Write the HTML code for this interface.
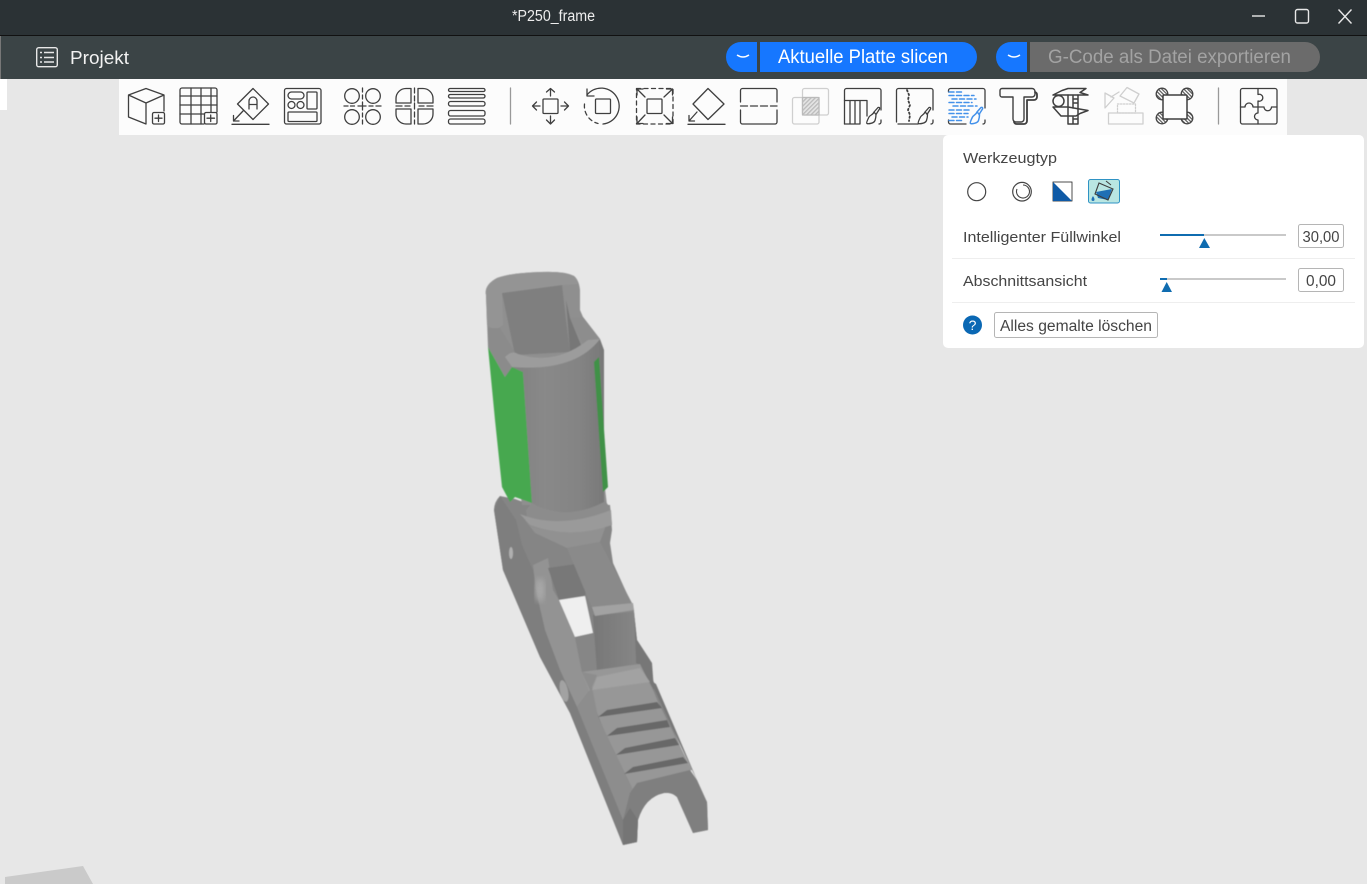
<!DOCTYPE html>
<html lang="de"><head><meta charset="utf-8"><title>P250_frame</title>
<style>html,body{margin:0;padding:0;background:#e7e7e7;overflow:hidden}svg{display:block}text{font-family:"Liberation Sans",sans-serif}</style></head>
<body>
<svg width="1367" height="884" viewBox="0 0 1367 884" xmlns="http://www.w3.org/2000/svg">
<defs>
<linearGradient id="cyl" x1="0" x2="1" y1="0" y2="0"><stop offset="0" stop-color="#7f7f7f"/><stop offset=".4" stop-color="#898989"/><stop offset=".75" stop-color="#848484"/><stop offset="1" stop-color="#787878"/></linearGradient>
<linearGradient id="post" x1="0" x2="1" y1="0" y2="0"><stop offset="0" stop-color="#777"/><stop offset="1" stop-color="#868686"/></linearGradient>
<filter id="soft"><feGaussianBlur stdDeviation=".6"/></filter>
<filter id="blur3"><feGaussianBlur stdDeviation="3"/></filter>
<pattern id="hatch" width="3" height="3" patternUnits="userSpaceOnUse" patternTransform="rotate(-45)"><rect width="3" height="3" fill="#e4e4e4"/><rect width="3" height="1.3" fill="#bbb"/></pattern>
<pattern id="hatch2" width="2.6" height="2.6" patternUnits="userSpaceOnUse" patternTransform="rotate(45)"><rect width="2.6" height="2.6" fill="#fff"/><rect width="2.6" height="1.3" fill="#666"/></pattern>
</defs>
<rect width="1367" height="884" fill="#e7e7e7"/>
<polygon points="5,884 5,877 83,866 93,884" fill="#cacaca"/>

<!-- top bars -->
<rect width="1367" height="35" fill="#2b3235"/>
<rect y="35" width="1367" height="1" fill="#111"/>
<rect y="36" width="1367" height="43" fill="#3b4446"/>
<rect y="36" width="1" height="43" fill="#777"/>
<rect y="79" width="7" height="31" fill="#fff"/>
<text x="512" y="21" font-size="15.500" fill="#eee" textLength="83" lengthAdjust="spacingAndGlyphs">*P250_frame</text>
<g fill="none" stroke="#e8e8e8" stroke-width="1.400">
<path d="M1252 16h13"/><rect x="1295.500" y="9.500" width="13" height="13.500" rx="2"/><path d="M1338.500 9.500l13 14M1351.500 9.500l-13 14"/>
<rect x="36.700" y="47.700" width="20.600" height="19" rx="2"/><path d="M44 52.500h10M44 57.500h10M44 62h10"/><path d="M40 52.500h2M40 57.500h2M40 62h2"/>
</g>
<text x="70" y="64" font-size="18.500" fill="#f2f2f2" textLength="59" lengthAdjust="spacingAndGlyphs">Projekt</text>
<path d="M757 42H741a15 15 0 0 0 0 30h16z" fill="#1677ff"/>
<path d="M760 42H962a15 15 0 0 1 0 30H760z" fill="#1677ff"/>
<path d="M737 55q6 4 12 0" fill="none" stroke="#fff" stroke-width="1.500"/>
<text x="778" y="63" font-size="19" fill="#fff" textLength="170" lengthAdjust="spacingAndGlyphs">Aktuelle Platte slicen</text>
<path d="M1027 42H1011a15 15 0 0 0 0 30h16z" fill="#1677ff"/>
<path d="M1030 42H1305a15 15 0 0 1 0 30H1030z" fill="#6b6b6b"/>
<path d="M1008 55q6 4 12 0" fill="none" stroke="#fff" stroke-width="1.500"/>
<text x="1048" y="63" font-size="19" fill="#a3a3a3" textLength="243" lengthAdjust="spacingAndGlyphs">G-Code als Datei exportieren</text>

<!-- toolbar -->
<rect x="119" y="79" width="1168" height="56" fill="#fcfcfc"/>
<g fill="none" stroke="#3f3f3f" stroke-width="1.300" stroke-linejoin="round" stroke-linecap="round">
<!-- cube -->
<path d="M128.500 95L146 88.500L164 95V111M128.500 95L146 103L164 95M146 103V124M128.500 95V117L146 124"/>
<rect x="152.500" y="112.500" width="12" height="11.500" rx="1.500"/><path d="M155 118.200h7M158.500 115v6.500"/>
<!-- grid -->
<path d="M204 124H182a2 2 0 0 1-2-2V90a2 2 0 0 1 2-2h33a2 2 0 0 1 2 2V112"/>
<path d="M191 88v36M201 88v36M211 88v24M180 96h37M180 105h37M180 114h24"/>
<rect x="204.500" y="112.500" width="12.500" height="11.500" rx="1.500"/><path d="M207 118.200h7.500M210.700 115v6.500"/>
<!-- diamond A -->
<path d="M253 88.500L268.500 104L253 119.500L237.500 104Z"/>
<path d="M249 109V101a4 4 0 0 1 8 0V109M249 104.500h8"/>
<path d="M243 111L233.500 121M233.500 115.500V121H239"/><path d="M232 124.300H269"/>
<!-- arrange -->
<rect x="284.500" y="88.500" width="36.500" height="35.500" rx="2"/>
<rect x="288" y="92" width="16" height="7" rx="3.500"/><circle cx="291.500" cy="105" r="3.500"/><circle cx="300.500" cy="105" r="3.500"/>
<rect x="307" y="92" width="10" height="17" rx="1"/><rect x="288" y="112" width="29" height="9.500" rx="1"/>
<!-- circles -->
<circle cx="352" cy="96" r="7.300"/><circle cx="373" cy="96" r="7.300"/><circle cx="352" cy="117" r="7.300"/><circle cx="373" cy="117" r="7.300"/>
<path d="M344 106h4M350.500 106h4M358 106h8M369 106h4M376 106h5M362.500 88v4M362.500 95v4M362.500 102v8M362.500 113v4M362.500 120v4"/>
<!-- quadrants -->
<path d="M411 88.500H406a10 10 0 0 0-10 10V103H411ZM418 88.500H423a10 10 0 0 1 10 10V103H418ZM411 124H406a10 10 0 0 1-10-10V109H411ZM418 124H423a10 10 0 0 0 10-10V109H418Z"/>
<path d="M396 106h6M405 106h5M419 106h5M427 106h6M414.500 88v5M414.500 96v5M414.500 103v6M414.500 112v5M414.500 120v4"/>
<!-- stripes -->
<rect x="448.500" y="88.500" width="36.500" height="3" rx="1.500"/><rect x="448.500" y="94.500" width="36.500" height="3.500" rx="1.700"/><rect x="448.500" y="101.500" width="36.500" height="4.500" rx="2"/><rect x="448.500" y="110.500" width="36.500" height="5.500" rx="2"/><rect x="448.500" y="119" width="36.500" height="5" rx="2"/>
<path d="M510.500 88V124" stroke="#999"/>
<!-- move -->
<rect x="543" y="99" width="15" height="14.500" rx="1"/>
<path d="M550.500 88.500V96M546.500 92L550.500 88.500L554.500 92M550.500 116V124M546.500 120L550.500 124L554.500 120M532.500 106H540M536.500 102L532.500 106L536.500 110M561 106H568.500M564.500 102L568.500 106L564.500 110"/>
<!-- rotate -->
<rect x="595.500" y="99" width="15" height="14.500" rx="1"/>
<path d="M587 95A18 18 0 1 1 603 124"/><path d="M587 89V96H594"/>
<path d="M584.500 104a18 18 0 0 0 13.500 19.500" stroke-dasharray="4 3.500"/>
<!-- scale -->
<rect x="647" y="99" width="15" height="14.500" rx="1"/>
<rect x="636.500" y="88.500" width="36.500" height="35.500" stroke-dasharray="4 3.500"/>
<path d="M637 89L645 97M637 95V89H643M672.500 89L664 97M672.500 95V89H666.500M637 123.500L645 115M637 117V123.500H643M672.500 123.500L664 115M672.500 117V123.500H666.500"/>
<!-- lay flat -->
<path d="M708 88.500L724 104L708 119.500L693 104Z"/><path d="M697 112L689 121M689 115.500V121H694.500"/><path d="M688 124.300H725"/>
<!-- cut -->
<path d="M740.500 102V90.500a2 2 0 0 1 2-2H775a2 2 0 0 1 2 2V102M740.500 110V122a2 2 0 0 0 2 2H775a2 2 0 0 0 2-2V110"/>
<path d="M740.500 106H777" stroke-dasharray="7 3"/>
<!-- boolean -->
<g stroke="#cfcfcf"><rect x="802.500" y="88.500" width="26" height="26.500" rx="2" fill="none"/><rect x="792.500" y="97.500" width="26.500" height="26.500" rx="2" fill="none"/><rect x="802.500" y="97.500" width="16.500" height="17.500" fill="url(#hatch)" stroke="#bbb"/></g>
<!-- supports -->
<path d="M844.500 124V90.500a2 2 0 0 1 2-2H879a2 2 0 0 1 2 2V110M881 120V122a2 2 0 0 1-2 2"/>
<path d="M844.500 100.500H867V116M850 100.500V124M855 100.500V124M860 100.500V124M844.500 124H860"/>
<path d="M874 112l4-4.500c1.500-.5 2 .5 1.500 1.500l-3.500 5.500M874 112c-1 3-4 3-5 5s-3 6-2 6.500 7 0 8-3 1-5 1-6z"/>
<!-- seam -->
<path d="M896.500 122V90.500a2 2 0 0 1 2-2H931a2 2 0 0 1 2 2V110M933 120V122a2 2 0 0 1-2 2M898 124H918"/>
<path d="M907 90l2 5-1 5 2 5-2 5 2 5-1 6" stroke-dasharray="1.500 2.500" stroke-width="1.800"/>
<path d="M925 112l4-4.500c1.500-.5 2 .5 1.500 1.500l-3.500 5.500M925 112c-1 3-3.500 3-4.500 5s-3 6-2 6.500 7 0 8-3 1-5 1-6z"/>
<!-- fuzzy paint -->
<path d="M948.500 92V90.500a2 2 0 0 1 2-2H983a2 2 0 0 1 2 2V108M985 120V122a2 2 0 0 1-2 2M948.500 120V122a2 2 0 0 0 2 2H966"/>
<g stroke="#4391ea" stroke-width="1.500" stroke-dasharray="5 2.500">
<path d="M949 92H964M949 95.500H974M952 99H976M949 102.500H972M953 106H977M949 110H970M949 113.500H968M952 117H968M949 120.500H962"/>
<path d="M977 112l4-4.500c1.500-.5 2 .5 1.500 1.500l-3.500 5.500M977 112c-1 3-3.500 3-4.500 5s-3 6-2 6.500 7 0 8-3 1-5 1-6z" stroke-dasharray="none"/>
</g>
<!-- T -->
<path d="M1002 88.500H1032a3 3 0 0 1 3 3V94a3 3 0 0 1-3 3H1024V119a3 3 0 0 1-3 3H1016a3 3 0 0 1-3-3V97H1002a2 2 0 0 1-2-2V90.500a2 2 0 0 1 2-2Z" stroke-width="1.400"/>
<path d="M1035 92a3 3 0 0 1 2 3V97a3 3 0 0 1-3 3H1027V121a3 3 0 0 1-3 3H1017a3 3 0 0 1-3-2" stroke-width="1.800"/>
<!-- calipers -->
<path d="M1053 95L1062 90.500L1068 88.500H1086L1080 92.500L1088 95H1053ZM1053 107H1068L1088 110.500L1080 113.500L1076 116H1061Z" stroke-width="1.500"/>
<circle cx="1058.500" cy="101" r="5.500" stroke-width="1.500"/>
<path d="M1068 95V124H1078V95M1073 96v12M1073 117v7M1074 99h3M1074 103h3M1074 119h3" stroke-width="1.500"/>
<!-- assembly -->
<g stroke="#cfcfcf">
<rect x="1108.500" y="113" width="34.500" height="11"/>
<rect x="1117.500" y="104" width="18" height="9" stroke-dasharray="1.500 1.500"/>
<path d="M1120 96L1127 87.500L1139 94L1134 103Z"/>
<path d="M1105 93V108L1114 98ZM1111 97L1119 92"/>
</g>
<!-- ears -->
<g fill="url(#hatch2)" stroke="#444"><circle cx="1162" cy="94" r="5.800"/><circle cx="1187" cy="94" r="5.800"/><circle cx="1162" cy="118" r="5.800"/><circle cx="1187" cy="118" r="5.800"/></g>
<rect x="1163" y="95" width="24" height="24" rx="1" fill="#fdfdfd" stroke-width="1.500"/>
<path d="M1218.500 88V124" stroke="#999"/>
<!-- puzzle -->
<rect x="1240.500" y="88.500" width="36.500" height="35.500" rx="2"/>
<path d="M1258 88.500V94.500A3.500 3.500 0 1 1 1258 101V107M1240.500 107H1245A3.500 3.500 0 1 1 1253 107H1258M1258 107H1264A3.500 3.500 0 1 0 1271.500 107H1277M1258 107V113A3.500 3.500 0 1 0 1258 120V124"/>
</g>

<!-- model -->
<g filter="url(#soft)">
<!-- lower silhouette -->
<path d="M494 510Q494 502 500 496L515 499L532 505L610 505L612 530L610 543L613 563L633 607L634 612L637 640L650 660L653 680L695 782L707 802L708 830L693 833L677 797Q672 792 664 793Q645 797 638 820L637 842L623 845L570 713L540 657L503 570Z" fill="#858585"/>
<polygon points="494,510 500,496 516,520 522,545 533,570 540,610 560,655 578,690 577,707 623,820 623,845 570,713 540,657 503,570" fill="#7e7e7e"/>
<!-- limb -->
<polygon points="533,565 548,558 553,590 559,600 575,637 582,672 592,687 577,707 560,670 545,630 536,590" fill="#939393"/>
<ellipse cx="540" cy="590" rx="5" ry="12" fill="#a8a8a8" filter="url(#blur3)"/>
<polygon points="548,568 590,562 585,596 559,600" fill="#787878"/>
<polygon points="559,600 585,596 593,633 575,637" fill="#efefef"/>
<polygon points="575,637 593,633 597,672 582,672" fill="#868686"/>
<ellipse cx="564" cy="691" rx="4" ry="11" transform="rotate(-12 564 691)" fill="#a2a2a2"/>
<ellipse cx="511" cy="553" rx="2" ry="6" fill="#b0b0b0"/>
<!-- post & strap -->
<polygon points="634,612 637,640 652,663 654,690 640,665 636,663" fill="#777"/>
<polygon points="593,615 634,610 636,663 597,672" fill="url(#post)"/>
<path d="M525 520L535 533L567 548L600 542L608 520Z" fill="#919191"/>
<polygon points="567,548 600,542 633,605 634,612 595,615" fill="#8a8a8a"/>
<polygon points="592,607 633,603 634,610 595,616" fill="#a2a2a2"/>
<!-- rail -->
<polygon points="582,672 640,664 653,690 658,702 692,770 637,783 630,793 610,745 592,700" fill="#979797"/>
<polygon points="582,672 597,675 592,687 598,717 638,800 623,820 577,707 590,690" fill="#8d8d8d"/>
<polygon points="597,677 640,668 650,682 592,690" fill="#a2a2a2"/>
<polygon points="650,680 656,684 697,780 692,770" fill="#777"/>
<polygon points="598,717 607,710 657,702 662,708" fill="#686868"/>
<polygon points="607,736 617,728 667,720 670,727" fill="#686868"/>
<polygon points="616,755 625,748 675,738 679,745" fill="#686868"/>
<polygon points="624,774 633,767 683,757 688,763" fill="#686868"/>
<path d="M623 820L630 793L637 783L690 770L697 780L707 802L708 830L693 833L677 797Q672 792 664 793Q645 797 638 820L637 842L623 845Z" fill="#7f7f7f"/>
<polygon points="623,820 630,808 638,820 637,842 623,845" fill="#747474"/>
<!-- top block -->
<path d="M486 295Q484 285 497 278Q510 273 540 272Q565 271 574 276Q579 280 580 290L580 310L583 317L600 339L604 480L607 505L522 505L505 377L488 347Z" fill="#8f8f8f"/>
<polygon points="502,293 562,285 566,320 570,352 515,355" fill="#7f7f7f"/>
<polygon points="566,300 570,318 583,350 570,352" fill="#777"/>
<path d="M486 295Q484 285 497 278Q510 273 540 272Q565 271 574 276Q578 280 578 284L562 285L502 293L503 325L495 330L487 325Z" fill="#949494"/>
<polygon points="570,318 583,317 600,339 588,340 585,348" fill="#8d8d8d"/>
<polygon points="488,328 500,328 515,352 505,357 512,367 505,377 488,347" fill="#8b8b8b"/>
<!-- green -->
<polygon points="488,347 505,377 512,367 523,372 532,503 515,497 510,502 502,487 495,420" fill="#46a84f"/>
<!-- cylinder -->
<path d="M532 503Q560 520 604 500L610 507L612 525Q570 540 528 525L526 510Z" fill="#8c8c8c"/>
<path d="M505 357Q550 372 600 339L604 350L604 502Q565 522 532 503L523 372L512 367Z" fill="url(#cyl)"/>
<path d="M505 357Q512 350 518 354Q555 366 588 340L600 339Q575 372 512 367Z" fill="#9c9c9c"/>
<polygon points="594,362 599,357 608,487 603,492" fill="#3f9146"/>
<path d="M520 514Q560 530 611 510L612 525Q570 540 530 525Z" fill="#9a9a9a"/>
</g>

<!-- panel -->
<rect x="943" y="135" width="421" height="213" rx="5" fill="#fff"/>
<g fill="#444">
<text x="963" y="163" font-size="15" textLength="94" lengthAdjust="spacingAndGlyphs">Werkzeugtyp</text>
<text x="963" y="242" font-size="15" textLength="158" lengthAdjust="spacingAndGlyphs">Intelligenter Füllwinkel</text>
<text x="963" y="286" font-size="15" textLength="124" lengthAdjust="spacingAndGlyphs">Abschnittsansicht</text>
</g>
<circle cx="976.700" cy="191.700" r="9" fill="#fff" stroke="#444" stroke-width="1.200"/>
<circle cx="1022" cy="191.700" r="9.300" fill="#fff" stroke="#444" stroke-width="1.200"/><path d="M1023 185a6.500 6.500 0 1 1-6 4" fill="none" stroke="#444" stroke-width="1.100"/>
<rect x="1053" y="182" width="19" height="19" fill="#fff" stroke="#222" stroke-width=".8"/><polygon points="1053,182 1053,201 1072,201" fill="#0f5aa6"/>
<rect x="1088.500" y="179.500" width="31" height="23.500" rx="2" fill="#b9e6e2" stroke="#2f93c4" stroke-width="1"/>
<polygon points="1096,192 1112,189 1108,200 1098,198" fill="#1f6fb5"/>
<path d="M1099 183L1113 189L1108 200L1095 194Z" fill="none" stroke="#3d3d3d" stroke-width="1.100"/><path d="M1106 181L1111 185" stroke="#3d3d3d" fill="none"/>
<path d="M1093 196c-2 3-2 5 0 5s2-2 0-5z" fill="#1f6fb5"/>
<rect x="1160" y="234" width="126" height="2" fill="#c9c9c9"/><rect x="1160" y="234" width="44" height="2" fill="#0f6cb0"/>
<polygon points="1204.300,238 1199,248 1210,248" fill="#0f6cb0"/>
<rect x="1298.500" y="224.500" width="45" height="23" rx="2" fill="#fff" stroke="#b5b5b5"/>
<text x="1321" y="242" font-size="16" fill="#444" text-anchor="middle" textLength="37" lengthAdjust="spacingAndGlyphs">30,00</text>
<rect x="952" y="258" width="403" height="1" fill="#eee"/>
<rect x="1160" y="278" width="126" height="2" fill="#c9c9c9"/><rect x="1160" y="278" width="7" height="2" fill="#0f6cb0"/>
<polygon points="1166.700,282 1161.500,292 1172,292" fill="#0f6cb0"/>
<rect x="1298.500" y="268.500" width="45" height="23" rx="2" fill="#fff" stroke="#b5b5b5"/>
<text x="1321" y="286" font-size="16" fill="#444" text-anchor="middle" textLength="30" lengthAdjust="spacingAndGlyphs">0,00</text>
<rect x="952" y="302" width="403" height="1" fill="#eee"/>
<circle cx="972.500" cy="325" r="9.500" fill="#0a68b4"/>
<text x="972.500" y="330" font-size="14" fill="#fff" text-anchor="middle">?</text>
<rect x="994.500" y="312.500" width="163" height="25" rx="2" fill="#fff" stroke="#b5b5b5"/>
<text x="1000" y="331" font-size="15.500" fill="#444" textLength="152" lengthAdjust="spacingAndGlyphs">Alles gemalte löschen</text>
</svg>
</body></html>
